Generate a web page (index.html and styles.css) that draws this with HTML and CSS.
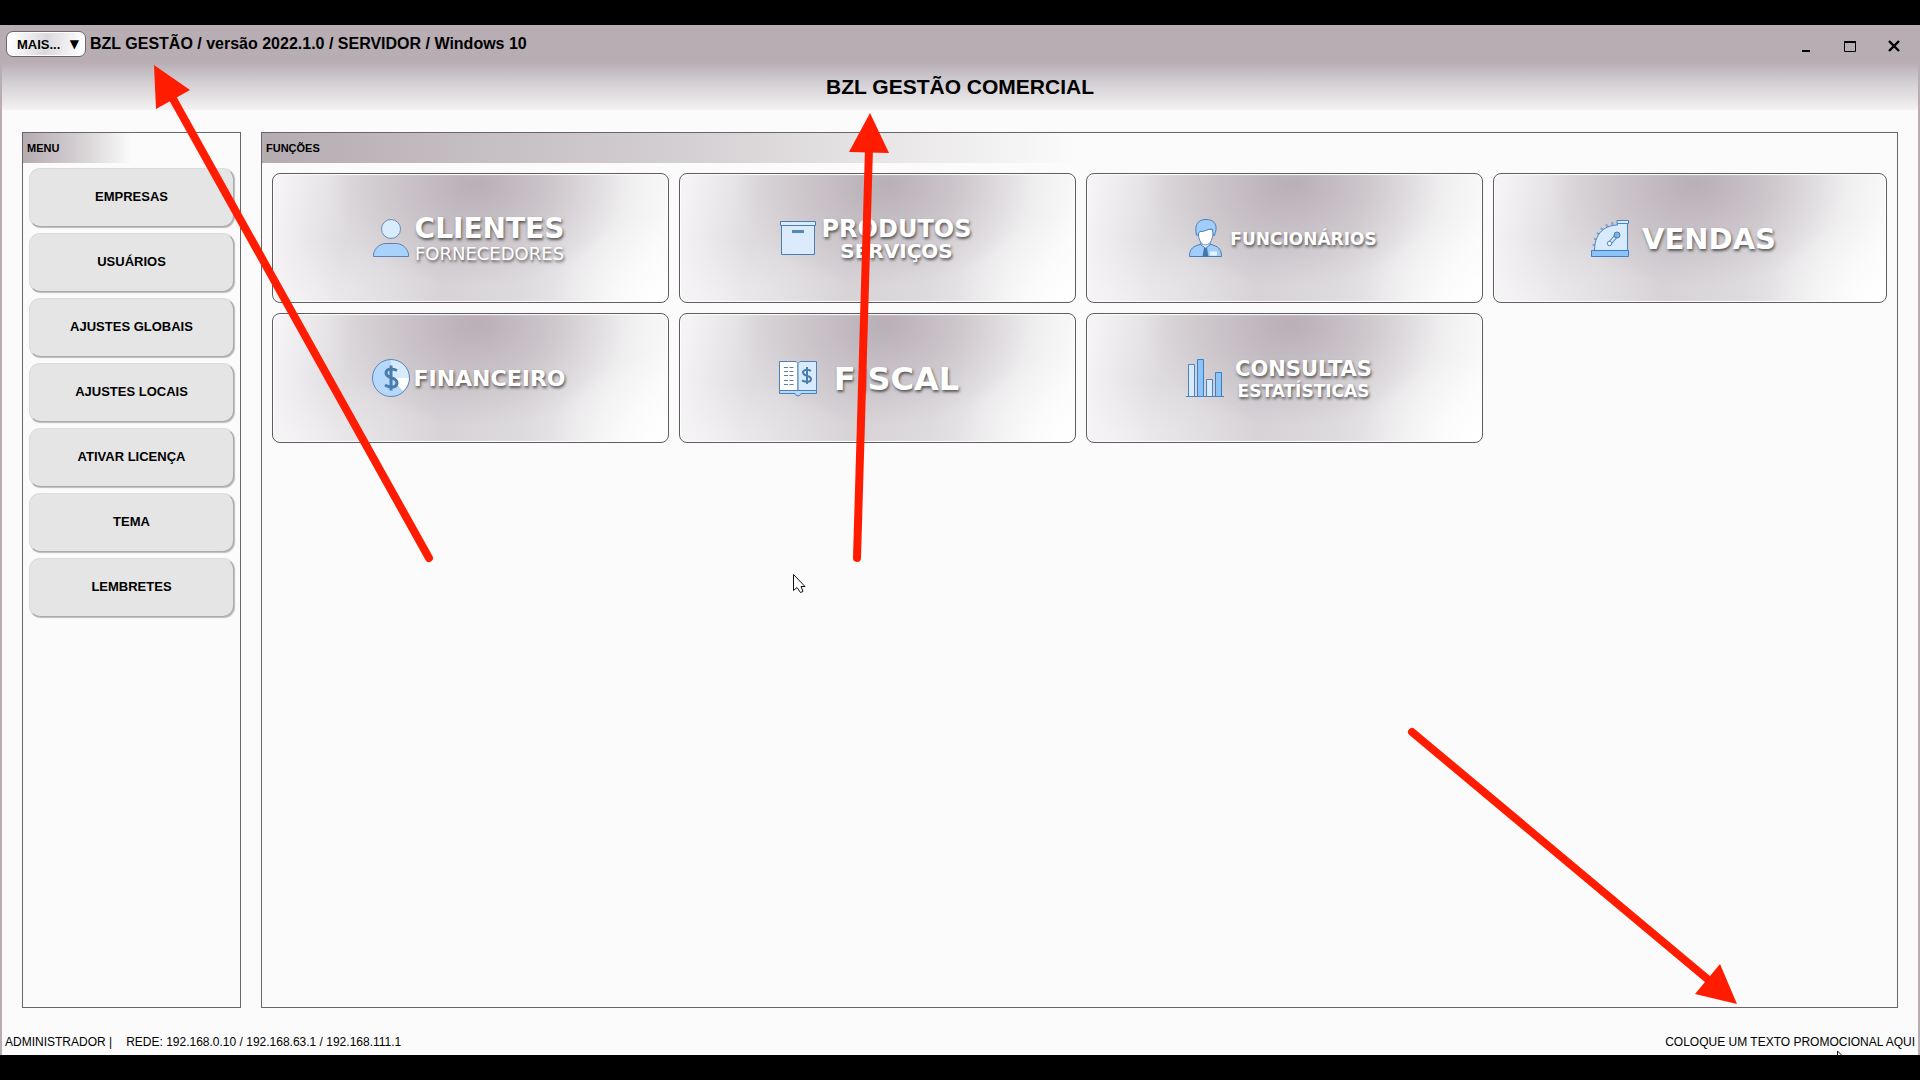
FILE: index.html
```html
<!DOCTYPE html>
<html lang="pt-BR">
<head>
  <meta charset="UTF-8" />
  <meta name="viewport" content="width=device-width, initial-scale=1" />
  <title>BZL Gestão Comercial</title>
  <link rel="stylesheet" href="styles.css">
</head>
<body>
  <div class="window">
    <header class="top">
      <div class="titlebar">
        <button class="more" type="button">MAIS... <span class="caret">▼</span></button>
        <span class="app-name">BZL GESTÃO / versão 2022.1.0 / SERVIDOR / Windows 10</span>
        <div class="controls">
          <button type="button" aria-label="Minimizar">
            <svg width="16" height="16" viewBox="0 0 16 16"><path d="M4 13h8" stroke="#000" stroke-width="2"/></svg>
          </button>
          <button type="button" aria-label="Maximizar">
            <svg width="16" height="16" viewBox="0 0 16 16"><path d="M2.500 4v9.500h11V4" fill="none" stroke="#000"/><path d="M2 4h12" stroke="#000" stroke-width="2"/></svg>
          </button>
          <button type="button" aria-label="Fechar">
            <svg width="16" height="16" viewBox="0 0 16 16"><path d="M3 3l10 10M13 3L3 13" stroke="#000" stroke-width="2.400"/></svg>
          </button>
        </div>
      </div>
      <h1>BZL GESTÃO COMERCIAL</h1>
    </header>

    <main>
      <nav class="panel menu">
        <h2>MENU</h2>
        <div class="menu-list">
          <button type="button">EMPRESAS</button>
          <button type="button">USUÁRIOS</button>
          <button type="button">AJUSTES GLOBAIS</button>
          <button type="button">AJUSTES LOCAIS</button>
          <button type="button">ATIVAR LICENÇA</button>
          <button type="button">TEMA</button>
          <button type="button">LEMBRETES</button>
        </div>
      </nav>

      <section class="panel functions">
        <h2>FUNÇÕES</h2>
        <div class="tiles">
          <button class="tile" type="button">
            <svg class="icon" viewBox="0 0 38 38">
              <circle cx="19" cy="10" r="9.500" fill="#d8ecfd" stroke="#6c8bb8"/>
              <path d="M1.500 37.500V35C3 28 9 24.500 14 24.500h10c5 0 11 3.500 12.500 10.500v2.500z" fill="#a9d2fb" stroke="#5f80b0"/>
            </svg>
            <span class="label"><span class="t28">CLIENTES</span><span class="t18 thin">FORNECEDORES</span></span>
          </button>

          <button class="tile" type="button">
            <svg class="icon" viewBox="0 0 38 38">
              <path d="M2.500 5.500h33v30h-33z" fill="#dcebfc" stroke="#4a7db4"/>
              <path d="M1.500 2.500h35v4h-35z" fill="#dcebfc" stroke="#4a7db4"/>
              <path d="M13 12.500h12" stroke="#5587b3" stroke-width="3"/>
            </svg>
            <span class="label"><span class="t24">PRODUTOS</span><span class="t20">SERVIÇOS</span></span>
          </button>

          <button class="tile" type="button">
            <svg class="icon" viewBox="0 0 38 38">
              <path d="M3.500 37.500C3.500 31 6 28 11 26.500l4-1.500h9l4 1.500c5 1.500 7.500 4.500 7.500 11z" fill="#a0cdfa" stroke="#4a7db8"/>
              <path d="M15 22v4l4.500 3 4.500-3v-4z" fill="#fff" stroke="#4a7db8"/>
              <path d="M18 29h3l1.500 8.500h-6z" fill="#4377ab"/>
              <path d="M24 32.500h7v4h-7z" fill="#e6f3ff"/>
              <path d="M12 10c0 9 2 16 7.500 16S27 19 27.500 10z" fill="#fff" stroke="#5a86b8"/>
              <path d="M10.500 16C8 6 12 .5 20 .5c7 0 10.500 4 10 9 0 3-1 5.500-2 7.500-1-2-1-4-2-7-5 0-7 3-12 2.500-1.500 1-1.500 2-1.500 4z" fill="#a0cdfa" stroke="#4a7db8"/>
            </svg>
            <span class="label"><span class="t17">FUNCIONÁRIOS</span></span>
          </button>

          <button class="tile" type="button">
            <svg class="icon" viewBox="0 0 38 38">
              <path d="M3 27C4 16 12 5 24 4" fill="none" stroke="#7ba4cf" stroke-width="3" stroke-dasharray="2 4"/>
              <path d="M3.500 31.500C3.500 17 11 6.500 26.500 6V4.500h10v27z" fill="#d8eafd" stroke="#4a82bd"/>
              <path d="M26 1.500h11.500v3H26z" fill="#d8eafd" stroke="#4a82bd"/>
              <path d="M.5 31.500h37v6H.5z" fill="#8cc4fa" stroke="#3f7ec2"/>
              <path d="M19 24l7-8" stroke="#4a7db4" stroke-width="4"/>
              <path d="M19 24l7-8" stroke="#d8eafd" stroke-width="2"/>
              <circle cx="26" cy="16" r="3" fill="#7fb0e0" stroke="#4a7db4"/>
              <circle cx="18.500" cy="24.500" r="2.200" fill="#fff" stroke="#4a7db4"/>
            </svg>
            <span class="label"><span class="t29">VENDAS</span></span>
          </button>

          <button class="tile" type="button">
            <svg class="icon" viewBox="0 0 38 38">
              <circle cx="19" cy="19" r="18.500" fill="#b5d8fb"/>
              <path d="M19 19V1a18 18 0 0 1 18 18z" fill="#d8ebfd"/>
              <path d="M19 19h18a18 18 0 0 1-6 13z" fill="#fff"/>
              <circle cx="19" cy="19" r="18.500" fill="none" stroke="#5d86ba"/>
              <path d="M19 6.500v25M25 11.500c-4-2-11-2.500-11 2.500 0 6 11 3.500 11 10 0 5-7 5-12 2" fill="none" stroke="#4a7cae" stroke-width="3"/>
            </svg>
            <span class="label"><span class="t22">FINANCEIRO</span></span>
          </button>

          <button class="tile" type="button">
            <svg class="icon" viewBox="0 0 38 38">
              <path d="M.5 31.500h37v3H22c0 3-6 3-6 0H.5z" fill="#b5d8fb" stroke="#4a82bd"/>
              <path d="M.5 2.500H17l2 2v27H.5z" fill="#fff" stroke="#4a82bd"/>
              <path d="M19 4.500l2-2h16.500v29H19z" fill="#d8eafd" stroke="#4a82bd"/>
              <path d="M5 8.500h10M5 12.500h10M5 16.500h10M5 21.500h10M5 25.500h10" stroke="#5c7f9e" stroke-dasharray="4 1.500"/>
              <path d="M28 8v17M32 12c-3-2-8-1.500-8 1.500 0 4 8 2.500 8 6.500 0 3.500-5 3.500-9 1.500" fill="none" stroke="#4a7cae" stroke-width="2"/>
            </svg>
            <span class="label"><span class="t32">FISCAL</span></span>
          </button>

          <button class="tile" type="button">
            <svg class="icon" viewBox="0 0 38 38">
              <path d="M2.500 5.500h6v32h-6zM20.500 20.500h6v17h-6z" fill="#d8eafd" stroke="#4a82bd"/>
              <path d="M11.500.5h6v37h-6zM29.500 13.500h6v24h-6z" fill="#8cc4fa" stroke="#3f7ec2"/>
              <path d="M0 37.500h38" stroke="#4a82bd"/>
            </svg>
            <span class="label"><span class="t21">CONSULTAS</span><span class="t17">ESTATÍSTICAS</span></span>
          </button>
        </div>
      </section>
    </main>

    <footer>
      <span>ADMINISTRADOR |</span>
      <span>REDE: 192.168.0.10 / 192.168.63.1 / 192.168.111.1</span>
      <span class="promo">COLOQUE UM TEXTO PROMOCIONAL AQUI</span>
    </footer>
  </div>

  <!-- arrows and pointers drawn over the window -->
  <svg class="overlay" viewBox="0 0 1920 1080" aria-hidden="true">
    <g stroke="#ff1c00" stroke-width="8" stroke-linecap="round">
      <path d="M429 558L172 97"/>
      <path d="M857 558L869 148"/>
      <path d="M1412 732L1711 982"/>
    </g>
    <g fill="#ff1c00">
      <path d="M154 65l36 25-34 19z"/>
      <path d="M870 113l19 40-40-1z"/>
      <path d="M1737 1004l-42-10 25-30z"/>
    </g>
    <g fill="#fff" stroke="#111">
      <path d="M793.500 574.500v16l3.500-3 3.500 5 2.500-1-2-5h4z"/>
      <path d="M1837.500 1055v-4l4 4"/>
    </g>
  </svg>
</body>
</html>
```
FILE: styles.css
```css
* {
  box-sizing: border-box;
}
body {
  margin: 0;
  padding: 25px 0;
  background: #000;
  color: #000;
  font-family: "Liberation Sans", Arial, sans-serif;
  position: relative;
}
button {
  font-family: inherit;
  color: inherit;
  cursor: pointer;
}
h1, h2 {
  margin: 0;
}
.window {
  display: flex;
  flex-direction: column;
  min-height: calc(100vh - 50px);
  background: #fbfbfb;
  border: solid #b7adb3;
  border-width: 0 2px;
}

/* title bar */
.top {
  height: 107px;
  background: linear-gradient(#b7adb3 37px, #cbc6cb 52px, #f4f2f3 85px, #fbfbfb 85px);
}
.titlebar {
  display: flex;
  align-items: center;
  height: 38px;
  padding: 0 2px 0 4px;
}
.more {
  display: flex;
  align-items: center;
  justify-content: space-between;
  width: 80px;
  height: 26px;
  padding: 0 6px 0 10px;
  border: 1px solid #6c666a;
  border-radius: 7px;
  background: linear-gradient(100deg, #fff 5%, #dcd8dc 50%, #fff 95%);
  box-shadow: inset 0 0 0 1px #fff;
  font-size: 13px;
  font-weight: bold;
}
.caret {
  font-family: "DejaVu Sans", sans-serif;
  font-size: 12px;
}
.app-name {
  margin-left: 4px;
  font-size: 16px;
  font-weight: bold;
}
.controls {
  display: flex;
  margin-left: auto;
  padding-top: 3px;
}
.controls button {
  display: flex;
  align-items: center;
  justify-content: center;
  width: 44px;
  height: 32px;
  padding: 0;
  border: 0;
  background: none;
}
h1 {
  padding-top: 12px;
  font-size: 21px;
  line-height: 24px;
  text-align: center;
}

/* panels */
main {
  flex: 1;
  display: flex;
  gap: 20px;
  padding: 0 20px;
}
.panel {
  border: 1px solid #69666a;
}
.panel h2 {
  padding-left: 4px;
  font-size: 11px;
  line-height: 30px;
  background: linear-gradient(90deg, #b5acb1, #d3ced1 25%, #fbfbfb 50%);
}
.menu {
  width: 219px;
}
.menu-list {
  display: flex;
  flex-direction: column;
  gap: 6px;
  padding: 5px 6px;
}
.menu-list button {
  height: 59px;
  padding: 0 6px 2px;
  border: 1px solid #dcdcdc;
  border-right-color: #aaa;
  border-bottom-color: #aaa;
  border-radius: 11px;
  background: #e5e5e5;
  box-shadow: 1px 1px 1px #bbb;
  font-size: 13px;
  font-weight: bold;
}
.functions {
  flex: 1;
}
.tiles {
  display: grid;
  grid-template-columns: 397fr 397fr 397fr 394fr;
  gap: 10px;
  padding: 10px;
}
.tile {
  display: flex;
  align-items: center;
  justify-content: center;
  gap: 4px;
  height: 130px;
  padding: 0 4px 0 0;
  border: 1px solid #5f5c60;
  border-radius: 8px;
  background:
    radial-gradient(ellipse 38% 80% at 52% 8%, rgba(172, 160, 169, 0.7), rgba(172, 160, 169, 0)),
    radial-gradient(ellipse 40% 50% at 5% 100%, rgba(250, 249, 250, 0.6), rgba(250, 249, 250, 0)),
    radial-gradient(ellipse 30% 70% at 100% 100%, #fff, rgba(255, 255, 255, 0)),
    linear-gradient(100deg, #f5f3f5 2%, #dedbde 20%, #d6d2d6 45%, #dedbde 65%, #fafafa 97%);
  box-shadow: inset 0 0 1px 1px #fff;
}
.icon {
  width: 38px;
  height: 38px;
}
.label {
  display: flex;
  flex-direction: column;
  align-items: center;
  width: 152px;
  padding-top: 2px;
  color: #fff;
  font-family: Verdana, "DejaVu Sans", sans-serif;
  font-weight: bold;
  line-height: 24px;
  text-shadow: 1px 2px 3px #555;
}
.label .t28 {
  line-height: 30px;
}
.label span + span {
  line-height: 20px;
}
.label .thin {
  font-weight: normal;
}
.t17 { font-size: 17px; }
.t18 { font-size: 18px; }
.t20 { font-size: 20px; }
.t21 { font-size: 21px; }
.t22 { font-size: 22px; }
.t24 { font-size: 24px; }
.t28 { font-size: 28px; }
.t29 { font-size: 29px; }
.t32 { font-size: 32px; }

/* status bar */
footer {
  display: flex;
  gap: 14px;
  padding: 27px 3px 6px;
  font-size: 12px;
  line-height: 14px;
}
.promo {
  margin-left: auto;
}

.overlay {
  position: absolute;
  top: 0;
  left: 0;
  width: 100%;
  pointer-events: none;
}
```
